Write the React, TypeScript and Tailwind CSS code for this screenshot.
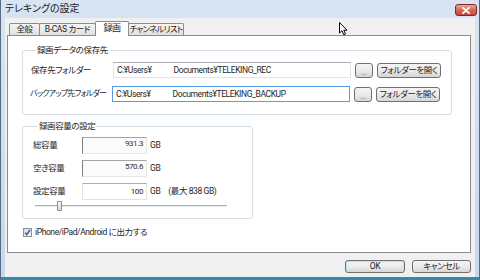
import React from 'react';

const font = "font-['Roboto','Noto_Sans_CJK_JP',sans-serif] [font-feature-settings:'palt'] tracking-[-0.4px] whitespace-nowrap";
const tabOff =
  'h-[12px] -ml-px flex items-center justify-center border border-b-0 border-[#898c95] rounded-t-[2px] bg-gradient-to-b from-[#f5f5f5] to-[#e0e0e0] text-[8.5px] leading-none';
const btn =
  'flex items-center justify-center border border-[#707070] rounded-[3px] bg-gradient-to-b from-[#f4f4f4] via-[#ebebeb] to-[#d6d6d6] text-[8.5px] leading-none text-[#1e1e1e]';
const pathInput =
  'w-[238px] h-[16px] flex items-center pl-[3px] bg-white text-[8.5px] leading-none overflow-hidden';

const PathRow = ({ label, path, focused, tight }: { label: string; path: string; focused?: boolean; tight?: boolean }) => (
  <div className="flex items-center h-[16px]">
    <span className={'w-[82px] leading-none' + (tight ? ' text-[8px] tracking-[-0.8px] -ml-px' : ' text-[8.5px]')}>{label}</span>
    <div
      className={
        pathInput +
        (focused
          ? ' border border-[#569de5]'
          : ' border border-[#e2e3ea] border-t-[#abadb3]')
      }
    >
      C:¥Users¥<span className="inline-block w-[22px]" />
      {path}
    </div>
    <div className={btn + ' ml-[4px] w-[18px] h-[15px] text-[#6d6d6d] pt-[4px]'}>...</div>
    <div className={btn + ' ml-[4px] w-[64px] h-[15px]'}>フォルダーを開く</div>
  </div>
);

const SizeRow = ({ label, value, editable, children }: { label: string; value: string; editable?: boolean; children: React.ReactNode }) => (
  <div className="flex items-center h-[17px]">
    <span className="w-[49px] text-[8.5px] leading-none">{label}</span>
    <div
      className={
        'w-[65px] h-[17px] flex justify-end pr-[3px] text-[8px] leading-none ' +
        (editable
          ? 'items-center bg-white border border-[#e2e3ea] border-t-[#abadb3]'
          : 'items-start pt-[2px] bg-[#fbfbfb] border border-[#e6e6e6] border-l-[#7d7d7d] border-t-[#a5a5a5] text-[#333]')
      }
    >
      {value}
    </div>
    <span className="ml-[3px] text-[8.5px] leading-none">{children}</span>
  </div>
);

export default function App() {
  return (
    <div className={'relative w-[480px] h-[280px] overflow-hidden flex flex-col bg-gradient-to-b from-[#d8e4f3] to-[#c6d8ee] border-x border-[#5b6a7c] text-[#1e1e1e] ' + font}>
      <div className="h-[18px] shrink-0 flex items-start justify-between pl-[4px] pr-[2px]">
        <span className="mt-[3px] text-[10px] leading-[12px] tracking-normal text-[#1a1a1a]">テレキングの設定</span>
        <div className="mt-[4px] w-[22px] h-[12px] flex items-center justify-center rounded-[3px] border border-[#7b2b23] bg-gradient-to-b from-[#eaa99c] via-[#d3685a] to-[#c2493c]">
          <svg width="8" height="7" viewBox="0 0 8 7">
            <path d="M1 0.8 L7 6.2 M7 0.8 L1 6.2" stroke="#fff" strokeWidth="1.8" strokeLinecap="round" />
          </svg>
        </div>
      </div>

      <div className="flex-1 mx-[4px] bg-[#f0f0f0] flex flex-col pt-[3px] pl-[2px] pr-[4px]">
        <div className="h-[14px] flex items-end pl-[2px]">
          <div className={tabOff + ' w-[31px] ml-0'}>全般</div>
          <div className={tabOff + ' w-[57px]'}>B-CAS カード</div>
          <div className="relative z-10 h-[15px] -mb-px -ml-px w-[34px] flex items-center justify-center border border-b-0 border-[#898c95] rounded-t-[2px] bg-white text-[9px] leading-none pb-[1px]">
            録画
          </div>
          <div className={tabOff + ' w-[56px] tracking-[-0.8px]'}>チャンネルリスト</div>
        </div>

        <div className="h-[218px] bg-white border border-[#898c95] flex flex-col pt-[8px] pl-[14px] pr-[18px]">
          <fieldset className="border border-[#d5dfe5] rounded-[3px] pt-[6px] pb-[12px] pl-[8px] flex flex-col gap-[8px]">
            <legend className="ml-[5px] px-[1px] text-[8.5px] leading-[12px]">録画データの保存先</legend>
            <PathRow label="保存先フォルダー" path="Documents¥TELEKING_REC" />
            <PathRow label="バックアップ先フォルダー" path="Documents¥TELEKING_BACKUP" focused tight />
          </fieldset>

          <fieldset className="mt-[5px] w-[231px] border border-[#d5dfe5] rounded-[3px] pt-[5px] pb-[7px] pl-[10px]">
            <legend className="ml-[5px] px-[1px] text-[8.5px] leading-[12px]">録画容量の設定</legend>
            <div className="flex flex-col gap-[6px]">
              <SizeRow label="総容量" value="931.3">GB</SizeRow>
              <SizeRow label="空き容量" value="570.6">GB</SizeRow>
              <SizeRow label="設定容量" value="100" editable>
                GB<span className="ml-[8px]">(最大 838 GB)</span>
              </SizeRow>
            </div>
            <div className="relative mt-[1px] ml-[2px] w-[192px] h-[10px]">
              <div className="absolute left-0 right-0 top-[4px] h-[2px] bg-[#e7eaea] border-t border-[#b0b0b0]" />
              <div className="absolute left-[22px] top-0 w-[5px] h-[10px] rounded-[1px] border border-[#8c8c8c] bg-gradient-to-b from-[#fafafa] to-[#dadada]" />
            </div>
          </fieldset>

          <div className="mt-[9px] ml-[1px] flex items-center gap-[3px]">
            <div className="w-[9px] h-[9px] border border-[#8e8f8f] bg-gradient-to-br from-[#dcdcdc] to-[#f6f6f6] flex items-center justify-center">
              <svg width="7" height="7" viewBox="0 0 7 7">
                <path d="M1 3.6 L2.8 5.6 L6 0.8" fill="none" stroke="#2b4fa8" strokeWidth="1.4" />
              </svg>
            </div>
            <span className="text-[8.5px] leading-none">iPhone/iPad/Android に出力する</span>
          </div>
        </div>

        <div className="mt-[7px] flex justify-end gap-[7px]">
          <div className={btn + ' w-[60px] h-[13px] border-[#3c7fb1] shadow-[inset_0_0_0_1px_#b7e2f8]'}>OK</div>
          <div className={btn + ' w-[59px] h-[13px]'}>キャンセル</div>
        </div>
      </div>
      <div className="h-[3px] shrink-0 bg-[#3a87a6]" />

      <svg className="absolute left-[338px] top-[22px]" width="9" height="14" viewBox="0 0 9 14">
        <path d="M0.5 0.5 L0.5 11 L3 8.7 L4.8 12.8 L6.5 12 L4.8 8.2 L8 8.2 Z" fill="#fff" stroke="#000" strokeWidth="1" strokeLinejoin="round" />
      </svg>
    </div>
  );
}
